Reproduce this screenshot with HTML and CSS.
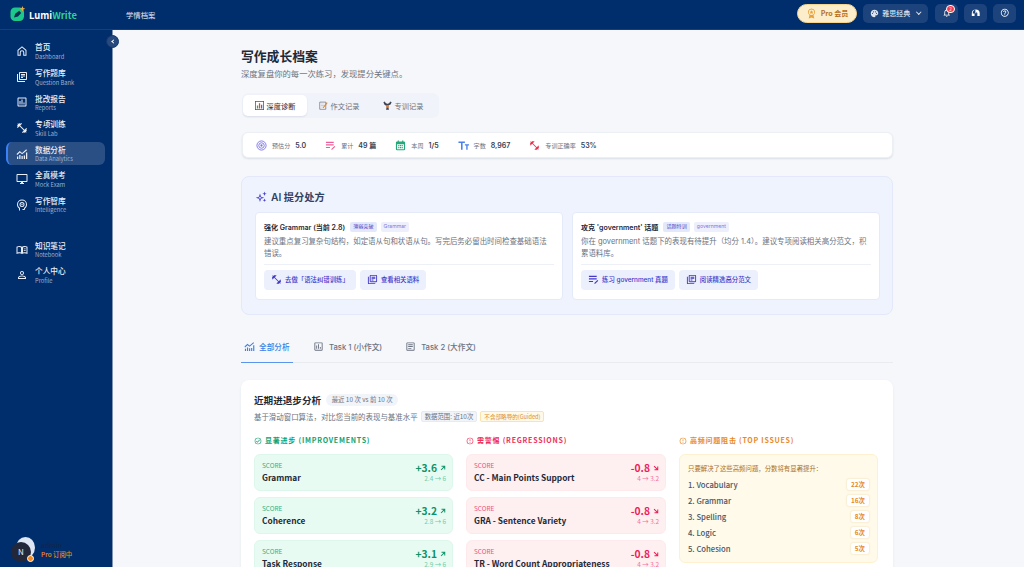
FILE: index.html
```html
<!DOCTYPE html>
<html lang="zh-CN">
<head>
<meta charset="utf-8">
<title>LumiWrite</title>
<link rel="stylesheet" href="styles.css">
</head>
<body>
<svg class="defs" width="0" height="0">
  <symbol id="i-home" viewBox="0 0 24 24"><path d="M12 2.500L3 10v11.500h6.500V15a2.500 2.500 0 0 1 5 0v6.500H21V10zm0 2.600l7 5.900v8.500h-2.500V15a4.500 4.500 0 0 0-9 0v4.500H5V11z"/></symbol>
  <symbol id="i-books" viewBox="0 0 24 24"><path d="M4 6H2v14c0 1.100.9 2 2 2h14v-2H4V6zm16-4H8c-1.100 0-2 .9-2 2v12c0 1.100.9 2 2 2h12c1.100 0 2-.9 2-2V4c0-1.100-.9-2-2-2zm0 14H8V4h12v12zM10 9h8v2h-8zm0 3h4v2h-4zm0-6h8v2h-8z"/></symbol>
  <symbol id="i-report" viewBox="0 0 24 24"><path d="M19 3H5c-1.100 0-2 .9-2 2v14c0 1.100.9 2 2 2h14c1.100 0 2-.9 2-2V5c0-1.100-.9-2-2-2zm0 16H5V5h14v14zM7 10h2v7H7zm4-3h2v10h-2zm4 6h2v4h-2z"/></symbol>
  <symbol id="i-fit" viewBox="0 0 24 24"><path d="M20.570 14.860L22 13.430 20.570 12 17 15.570 8.430 7 12 3.430 10.570 2 9.140 3.430 7.710 2 5.570 4.140 4.140 2.710 2.710 4.140l1.430 1.430L2 7.710l1.430 1.430L2 10.570 3.430 12 7 8.430 15.570 17 12 20.570 13.430 22l1.430-1.430L16.290 22l2.140-2.140 1.430 1.430 1.430-1.430-1.430-1.430L22 16.290z"/></symbol>
  <symbol id="i-chart" viewBox="0 0 24 24"><path d="M2 22v-5h2.500v5zm4.500 0v-8H9v8zm4.500 0v-6h2.500v6zm4.500 0v-7H18v7zm4.500 0V9h2.500v13zM2.500 14L1 12.200l6.500-6 4.700 3.600L20.500 2.500 22 4.300l-9.700 8.400L7.700 9.200z"/></symbol>
  <symbol id="i-desktop" viewBox="0 0 24 24"><path d="M21 2H3c-1.100 0-2 .9-2 2v12c0 1.100.9 2 2 2h7v2H8v2h8v-2h-2v-2h7c1.100 0 2-.9 2-2V4c0-1.100-.9-2-2-2zm0 14H3V4h18v12z"/></symbol>
  <symbol id="i-brain" viewBox="0 0 24 24"><path d="M12 1a10 10 0 0 0-10 10c0 3.200 1.500 6 4 7.800V23h2v-5.300C5.600 16.300 4 13.900 4 11a8 8 0 0 1 16 0c0 3-1.700 5.500-4 6.800V20h-3v2h3a2 2 0 0 0 2-2v-1.200c2.500-1.800 4-4.600 4-7.800A10 10 0 0 0 12 1zm0 5a5 5 0 1 0 0 10 5 5 0 0 0 0-10zm0 2a3 3 0 1 1 0 6 3 3 0 0 1 0-6zm0 1.700a1.300 1.300 0 1 0 0 2.600 1.300 1.300 0 0 0 0-2.600z"/></symbol>
  <symbol id="i-book" viewBox="0 0 24 24"><path d="M1 5.500C3 4.500 5 4 7 4c2 0 3.800.5 5 1.500C13.200 4.500 15 4 17 4c2 0 4 .5 6 1.500V20c-2-1-4-1.500-6-1.500-2 0-3.800.5-5 1.500-1.200-1-3-1.500-5-1.500-2 0-4 .5-6 1.500zm2 1.300V17c1.300-.4 2.700-.6 4-.6 1.100 0 2.100.2 3 .5V7c-.9-.6-1.900-1-3-1-1.300 0-2.700.3-4 .8zM14 7v10c.9-.3 1.900-.5 3-.5 1.300 0 2.700.2 4 .6V6.800C19.700 6.300 18.300 6 17 6c-1.100 0-2.100.4-3 1zm1.500 2h4v1.600h-4zm0 3h4v1.600h-4z"/></symbol>
  <symbol id="i-person" viewBox="0 0 24 24"><path d="M12 5.900c1.160 0 2.100.94 2.100 2.100s-.94 2.100-2.100 2.100S9.900 9.160 9.900 8s.94-2.100 2.100-2.100m0 9c2.970 0 6.100 1.460 6.100 2.100v1.100H5.900V17c0-.64 3.130-2.100 6.100-2.100M12 4C9.790 4 8 5.790 8 8s1.790 4 4 4 4-1.790 4-4-1.790-4-4-4zm0 9c-2.670 0-8 1.340-8 4v3h16v-3c0-2.660-5.330-4-8-4z"/></symbol>
  <symbol id="i-bell" viewBox="0 0 24 24"><path d="M12 22c1.100 0 2-.9 2-2h-4c0 1.100.9 2 2 2zm6-6v-5c0-3.070-1.640-5.640-4.500-6.320V4c0-.83-.67-1.500-1.500-1.500s-1.500.67-1.500 1.500v.68C7.630 5.360 6 7.920 6 11v5l-2 2v1h16v-1l-2-2zm-2 1H8v-6c0-2.480 1.510-4.500 4-4.500s4 2.020 4 4.500v6z"/></symbol>
  <symbol id="i-help" viewBox="0 0 24 24"><path d="M11 18h2v-2h-2v2zm1-16C6.480 2 2 6.480 2 12s4.480 10 10 10 10-4.480 10-10S17.520 2 12 2zm0 18c-4.410 0-8-3.590-8-8s3.590-8 8-8 8 3.590 8 8-3.590 8-8 8zm0-14c-2.210 0-4 1.790-4 4h2c0-1.100.9-2 2-2s2 .9 2 2c0 2-3 1.750-3 5h2c0-2.250 3-2.500 3-5 0-2.210-1.790-4-4-4z"/></symbol>
  <symbol id="i-palette" viewBox="0 0 24 24"><path d="M12 2C6.490 2 2 6.490 2 12s4.490 10 10 10c1.380 0 2.500-1.120 2.500-2.500 0-.61-.23-1.200-.64-1.670-.08-.1-.13-.21-.13-.33 0-.28.22-.5.5-.5H16c3.310 0 6-2.690 6-6 0-4.960-4.490-9-10-9zm-5.500 11a1.500 1.500 0 1 1 0-3 1.500 1.500 0 0 1 0 3zm3-4a1.500 1.500 0 1 1 0-3 1.500 1.500 0 0 1 0 3zm5 0a1.500 1.500 0 1 1 0-3 1.500 1.500 0 0 1 0 3zm3 4a1.500 1.500 0 1 1 0-3 1.500 1.500 0 0 1 0 3z"/></symbol>
  <symbol id="i-headset" viewBox="0 0 24 24"><path d="M2 20v-6a10 10 0 0 1 20 0v6h-6v-6.500c0-1.600-1-3-2.500-3.500v3H11V4.500h-1C6.500 5.500 4.500 9 4.500 13v1H9v6z"/></symbol>
  <symbol id="i-medal" viewBox="0 0 24 24"><path d="M12 1a8 8 0 0 0-4.500 14.600L6 23l6-2.500 6 2.500-1.500-7.400A8 8 0 0 0 12 1zm0 2a6 6 0 1 1 0 12 6 6 0 0 1 0-12zm0 2l-1.300 2.800-3 .3 2.200 2-.6 3L12 11.600l2.700 1.500-.6-3 2.200-2-3-.3z"/></symbol>
  <symbol id="i-edit" viewBox="0 0 24 24"><path d="M2 4h17v2.400H2zm0 5.500h17v2.400H2zm0 5.500h9v2.400H2zm18.500-2l1.900 1.900-6.600 6.600h-1.900v-1.900z"/></symbol>
  <symbol id="i-calendar" viewBox="0 0 24 24"><path d="M6 1h2.500v2h7V1H18v2h1.500A2.500 2.500 0 0 1 22 5.500V20a2.500 2.500 0 0 1-2.500 2.500h-15A2.500 2.500 0 0 1 2 20V5.500A2.500 2.500 0 0 1 4.500 3H6zM4.500 9v11h15V9zM7 11h2.500v2.500H7zm3.800 0h2.500v2.500h-2.500zm3.700 0H17v2.500h-2.500zM7 15.500h2.500V18H7zm3.800 0h2.500V18h-2.500zm3.700 0H17V18h-2.500z"/></symbol>
  <symbol id="i-text" viewBox="0 0 24 24"><path d="M1 3h14v3.400h-5V21H6.500V6.400H1zm14 6h9v3h-3v9h-3v-9h-3z"/></symbol>
  <symbol id="i-spark" viewBox="0 0 24 24"><path d="M10 5l2.200 6.300L18.500 13.500 12.200 15.700 10 22l-2.200-6.300L1.500 13.500l6.300-2.200zm0 5.500l-.9 2.100-2.100.9 2.100.9.900 2.100.9-2.100 2.100-.9-2.100-.9zM19 1l1.200 3.300L23.500 5.500l-3.300 1.200L19 10l-1.200-3.300L14.500 5.500l3.300-1.200zM19 15l1 2.500 2.500 1-2.500 1-1 2.500-1-2.500-2.500-1 2.500-1z"/></symbol>
  <symbol id="i-check" viewBox="0 0 24 24"><path d="M12 2a10 10 0 1 0 0 20 10 10 0 0 0 0-20zm0 18a8 8 0 1 1 0-16 8 8 0 0 1 0 16zm4.600-12.400L10 14.200l-2.600-2.600L6 13l4 4 8-8z"/></symbol>
  <symbol id="i-alert" viewBox="0 0 24 24"><path d="M12 2a10 10 0 1 0 0 20 10 10 0 0 0 0-20zm0 18a8 8 0 1 1 0-16 8 8 0 0 1 0 16zM11 7h2v6h-2zm0 8h2v2h-2z"/></symbol>
  <symbol id="i-up" viewBox="0 0 24 24"><path d="M6 3h15v15h-4V9.800L5.500 21.300 2.700 18.500 14.200 7H6z"/></symbol>
  <symbol id="i-down" viewBox="0 0 24 24"><path d="M6 21h15V6h-4v8.200L5.500 2.700 2.700 5.500 14.200 17H6z"/></symbol>
  <symbol id="i-doc" viewBox="0 0 24 24"><path d="M19 3H5a2 2 0 0 0-2 2v14a2 2 0 0 0 2 2h14a2 2 0 0 0 2-2V5a2 2 0 0 0-2-2zm0 16H5V5h14zM7 7h10v2H7zm0 4h10v2H7zm0 4h7v2H7z"/></symbol>
</svg>

<header class="topbar">
  <div class="brand">
    <svg class="logo" viewBox="0 0 16 16">
      <rect x="0.500" y="1.500" width="13.500" height="13.500" rx="4.500" fill="#1cc98a"/>
      <path d="M4 11.500l1.200-3.700 4-3 2 2.200-3.200 3.500z" fill="#0b2c55"/>
      <path d="M12.500 0l.8 2 2 .8-2 .8-.8 2-.8-2-2-.8 2-.8z" fill="#f6a93a"/>
    </svg>
    <span class="brand-name">Lumi<em>Write</em></span>
  </div>
  <div class="crumb">学情档案</div>
  <div class="top-actions">
    <button class="pro-pill"><svg class="ico medal"><use href="#i-medal"/></svg>Pro 会员</button>
    <button class="theme-btn"><svg class="ico"><use href="#i-palette"/></svg>雅思经典<span class="chev"></span></button>
    <button class="square-btn bell-btn"><svg class="ico"><use href="#i-bell"/></svg><span class="badge">2</span></button>
    <button class="square-btn"><svg class="ico"><use href="#i-headset"/></svg></button>
    <button class="square-btn"><svg class="ico"><use href="#i-help"/></svg></button>
  </div>
</header>

<div class="shell">
  <aside class="sidebar">
    <button class="collapse" aria-label="collapse"><span></span></button>
    <nav class="nav">
      <a class="nav-item"><svg class="nav-ico"><use href="#i-home"/></svg><span class="nav-text"><b>首页</b><small>Dashboard</small></span></a>
      <a class="nav-item"><svg class="nav-ico"><use href="#i-books"/></svg><span class="nav-text"><b>写作题库</b><small>Question Bank</small></span></a>
      <a class="nav-item"><svg class="nav-ico"><use href="#i-report"/></svg><span class="nav-text"><b>批改报告</b><small>Reports</small></span></a>
      <a class="nav-item"><svg class="nav-ico"><use href="#i-fit"/></svg><span class="nav-text"><b>专项训练</b><small>Skill Lab</small></span></a>
      <a class="nav-item active"><svg class="nav-ico"><use href="#i-chart"/></svg><span class="nav-text"><b>数据分析</b><small>Data Analytics</small></span></a>
      <a class="nav-item"><svg class="nav-ico"><use href="#i-desktop"/></svg><span class="nav-text"><b>全真模考</b><small>Mock Exam</small></span></a>
      <a class="nav-item"><svg class="nav-ico"><use href="#i-brain"/></svg><span class="nav-text"><b>写作智库</b><small>Intelligence</small></span></a>
    </nav>
    <nav class="nav nav-second">
      <a class="nav-item"><svg class="nav-ico"><use href="#i-book"/></svg><span class="nav-text"><b>知识笔记</b><small>Notebook</small></span></a>
      <a class="nav-item"><svg class="nav-ico"><use href="#i-person"/></svg><span class="nav-text"><b>个人中心</b><small>Profile</small></span></a>
    </nav>
    <div class="user">
      <div class="avatar"><span class="avatar-back"></span><span class="avatar-face">N</span><span class="avatar-tag"></span></div>
      <div class="user-text"><span class="user-name">admin</span><span class="user-plan">Pro 订阅中</span></div>
    </div>
  </aside>

  <main class="main">
    <h1 class="page-title">写作成长档案</h1>
    <p class="page-sub">深度复盘你的每一次练习，发现提分关键点。</p>

    <div class="mode-tabs">
      <button class="mode-tab on">
        <svg class="mode-ico" viewBox="0 0 12 12"><rect x=".5" y=".5" width="11" height="11" fill="#fff" stroke="#4b5563"/><rect x="2.500" y="6" width="1.700" height="4" fill="#3f9b57"/><rect x="5.200" y="3" width="1.700" height="7" fill="#d9483b"/><rect x="8" y="5" width="1.700" height="5" fill="#3b6fd8"/></svg>深度诊断</button>
      <button class="mode-tab">
        <svg class="mode-ico" viewBox="0 0 12 12"><path d="M1 1.500h8v9.500H1z" fill="#fff" stroke="#6b7280"/><path d="M2.500 4h5M2.500 6h5M2.500 8h3" stroke="#9ca3af" stroke-width=".7"/><path d="M5 8.500L10.300 1.500l1.200 1L6 9.500z" fill="#d98a3a"/></svg>作文记录</button>
      <button class="mode-tab">
        <svg class="mode-ico" viewBox="0 0 12 12"><path d="M.5 1.500l2-1 1 2 2 1h1l2-1 1-2 2 1-1.500 3-3 1.500V8l1 3.500H4l1-3.500V6.500l-3-1.500z" fill="#3d4350"/><rect x="4.300" y="5.500" width="3.400" height="3.500" fill="#e07b35"/></svg>专训记录</button>
    </div>

    <section class="stats">
      <div class="stat"><svg class="stat-ico c-violet" viewBox="0 0 24 24"><circle cx="12" cy="12" r="10" fill="none" stroke="currentColor" stroke-width="2"/><circle cx="12" cy="12" r="6" fill="none" stroke="currentColor" stroke-width="2"/><circle cx="12" cy="12" r="2.500" fill="currentColor"/></svg><span class="stat-label">预估分</span><b>5.0</b></div>
      <div class="stat"><svg class="stat-ico c-pink"><use href="#i-edit"/></svg><span class="stat-label">累计</span><b>49 篇</b></div>
      <div class="stat"><svg class="stat-ico c-green"><use href="#i-calendar"/></svg><span class="stat-label">本周</span><b>1/5</b></div>
      <div class="stat"><svg class="stat-ico c-blue"><use href="#i-text"/></svg><span class="stat-label">字数</span><b>8,967</b></div>
      <div class="stat"><svg class="stat-ico c-red"><use href="#i-fit"/></svg><span class="stat-label">专训正确率</span><b>53%</b></div>
    </section>

    <section class="ai-card">
      <h2 class="ai-title"><svg class="ai-ico"><use href="#i-spark"/></svg>AI 提分处方</h2>
      <div class="ai-grid">
        <article class="rx">
          <div class="rx-head"><strong>强化 Grammar (当前 2.8)</strong><span class="tag">薄弱突破</span><span class="tag light">Grammar</span></div>
          <p class="rx-body">建议重点复习复杂句结构，如定语从句和状语从句。写完后务必留出时间检查基础语法错误。</p>
          <div class="rx-actions">
            <button class="rx-btn"><svg class="rx-ico"><use href="#i-fit"/></svg>去做「语法纠错训练」</button>
            <button class="rx-btn"><svg class="rx-ico"><use href="#i-books"/></svg>查看相关语料</button>
          </div>
        </article>
        <article class="rx">
          <div class="rx-head"><strong>攻克 'government' 话题</strong><span class="tag">话题特训</span><span class="tag light">government</span></div>
          <p class="rx-body">你在 government 话题下的表现有待提升（均分 1.4）。建议专项阅读相关高分范文，积累语料库。</p>
          <div class="rx-actions">
            <button class="rx-btn"><svg class="rx-ico"><use href="#i-edit"/></svg>练习 government 真题</button>
            <button class="rx-btn"><svg class="rx-ico"><use href="#i-books"/></svg>阅读精选高分范文</button>
          </div>
        </article>
      </div>
    </section>

    <div class="task-tabs">
      <a class="task-tab on"><svg class="task-ico"><use href="#i-chart"/></svg>全部分析</a>
      <a class="task-tab"><svg class="task-ico"><use href="#i-report"/></svg>Task 1 (小作文)</a>
      <a class="task-tab"><svg class="task-ico"><use href="#i-doc"/></svg>Task 2 (大作文)</a>
    </div>

    <section class="progress">
      <div class="progress-head"><h2>近期进退步分析</h2><span class="pill">最近 10 次 vs 前 10 次</span></div>
      <div class="progress-sub"><span>基于滑动窗口算法，对比您当前的表现与基准水平</span><span class="chip">数据范围: 近10次</span><span class="chip warn">不含部略导的(Guided)</span></div>
      <div class="columns">
        <div class="col">
          <h3 class="col-title t-green"><svg class="col-ico"><use href="#i-check"/></svg>显著进步 (IMPROVEMENTS)</h3>
          <div class="delta good"><div><small>SCORE</small><b>Grammar</b></div><div class="delta-num"><span class="big">+3.6<svg class="arrow"><use href="#i-up"/></svg></span><span class="range">2.4 → 6</span></div></div>
          <div class="delta good"><div><small>SCORE</small><b>Coherence</b></div><div class="delta-num"><span class="big">+3.2<svg class="arrow"><use href="#i-up"/></svg></span><span class="range">2.8 → 6</span></div></div>
          <div class="delta good"><div><small>SCORE</small><b>Task Response</b></div><div class="delta-num"><span class="big">+3.1<svg class="arrow"><use href="#i-up"/></svg></span><span class="range">2.9 → 6</span></div></div>
        </div>
        <div class="col">
          <h3 class="col-title t-red"><svg class="col-ico"><use href="#i-alert"/></svg>需警惕 (REGRESSIONS)</h3>
          <div class="delta bad"><div><small>SCORE</small><b>CC - Main Points Support</b></div><div class="delta-num"><span class="big">-0.8<svg class="arrow"><use href="#i-down"/></svg></span><span class="range">4 → 3.2</span></div></div>
          <div class="delta bad"><div><small>SCORE</small><b>GRA - Sentence Variety</b></div><div class="delta-num"><span class="big">-0.8<svg class="arrow"><use href="#i-down"/></svg></span><span class="range">4 → 3.2</span></div></div>
          <div class="delta bad"><div><small>SCORE</small><b>TR - Word Count Appropriateness</b></div><div class="delta-num"><span class="big">-0.8<svg class="arrow"><use href="#i-down"/></svg></span><span class="range">4 → 3.2</span></div></div>
        </div>
        <div class="col">
          <h3 class="col-title t-orange"><svg class="col-ico"><use href="#i-alert"/></svg>高频问题阻击 (TOP ISSUES)</h3>
          <div class="issues">
            <p>只要解决了这些高频问题，分数将有显著提升：</p>
            <ul>
              <li>1. Vocabulary<span>22次</span></li>
              <li>2. Grammar<span>16次</span></li>
              <li>3. Spelling<span>8次</span></li>
              <li>4. Logic<span>6次</span></li>
              <li>5. Cohesion<span>5次</span></li>
            </ul>
          </div>
        </div>
      </div>
    </section>
  </main>
</div>
</body>
</html>
```
FILE: styles.css
```css
* { box-sizing: border-box; }
html, body { margin: 0; height: 567px; overflow: hidden; }
body {
  font-family: "Noto Sans CJK SC", "Noto Sans", sans-serif;
  background: #f5f7fa;
  color: #1f2937;
  width: 1024px;
}
button { font: inherit; border: 0; cursor: pointer; }
.defs { position: absolute; }
.ico { width: 8px; height: 8px; fill: currentColor; flex: none; }

.topbar {
  height: 30px;
  background: #002d6b;
  border-bottom: 1px solid #163f78;
  display: flex;
  align-items: center;
  color: #fff;
}
.brand { width: 126px; display: flex; align-items: center; padding-left: 10px; gap: 3px; }
.logo { width: 16px; height: 16px; margin-bottom: 2px; }
.brand-name { font-size: 9.400px; font-weight: 700; color: #fff; }
.brand-name em { font-style: normal; color: #2fd39a; }
.crumb { font-size: 7.360px; font-weight: 500; color: #c9d4e4; }
.top-actions { margin-left: auto; margin-right: 8px; display: flex; align-items: center; gap: 6px; margin-top: -3px; }
.pro-pill {
  width: 60px; height: 19px; border-radius: 10px;
  background: #fdeecb; border: 1px solid #f8d58f; color: #b8701d;
  font-size: 7.040px; font-weight: 700;
  display: flex; align-items: center; justify-content: center; gap: 4px; padding: 0;
}
.medal { width: 11px; height: 11px; color: #e8a23c; }
.theme-btn {
  width: 65px; height: 19px; border-radius: 5px;
  background: #1c437c; color: #dbe4f0; font-size: 7.040px; font-weight: 500;
  display: flex; align-items: center; justify-content: center; gap: 3px; padding: 0;
}
.theme-btn .ico { width: 9px; height: 9px; }
.chev { width: 3.500px; height: 3.500px; margin-left: 4px; margin-top: -2px; border-right: 1px solid #dbe4f0; border-bottom: 1px solid #dbe4f0; transform: rotate(45deg); }
.square-btn {
  width: 23px; height: 19px; border-radius: 5px; background: #1c437c; color: #fff;
  display: flex; align-items: center; justify-content: center; padding: 0; position: relative;
}
.square-btn .ico { width: 9.500px; height: 9.500px; }
.bell-btn { margin-left: 1px; }
.badge {
  position: absolute; top: 1px; right: 3px; width: 9px; height: 8px; border-radius: 4px;
  background: #ef3b4c; border: 1px solid #fff; color: #fff; font-size: 4.500px; line-height: 6px; text-align: center;
}

.shell { display: flex; height: 537px; }
.sidebar {
  width: 113px; flex: none; background: #002d6b; border-right: 1px solid #8094b2;
  position: relative; display: flex; flex-direction: column; padding: 9.500px 7px 0 6px;
}
.collapse {
  position: absolute; right: -7px; top: 4.500px; width: 13px; height: 13px; border-radius: 50%;
  background: #27497c; border: 1px solid #0f3670; padding: 0; display: flex; align-items: center; justify-content: center; z-index: 2;
}
.collapse span { width: 3px; height: 3px; margin-left: 1px; border-left: 1px solid #fff; border-bottom: 1px solid #fff; transform: rotate(45deg); }
.nav { display: flex; flex-direction: column; gap: 2.200px; }
.nav-second { margin-top: 21.500px; }
.nav-item {
  height: 23.400px; display: flex; align-items: center; gap: 7.500px; padding-left: 9.500px; border-radius: 6px;
  color: #e9eef6; border-left: 2px solid transparent; margin: 0;
}
.nav-item.active { background: #2a4f85; border-left-color: #3b82f6; }
.nav-ico { width: 12px; height: 12px; fill: currentColor; flex: none; margin-left: -2px; }
.nav-text { display: flex; flex-direction: column; line-height: 1; }
.nav-text b { font-size: 7.680px; font-weight: 500; color: #eef2f8; line-height: 9px; }
.nav-text small { font-size: 5.760px; color: #9fb2cd; line-height: 7px; margin-top: 1.500px; }
.user { margin-top: auto; margin-bottom: 3px; display: flex; align-items: center; gap: 6px; padding-left: 5px; }
.avatar { width: 24px; height: 27px; position: relative; flex: none; }
.avatar-back { position: absolute; left: 5px; top: 0; width: 19px; height: 21px; border-radius: 50%; background: #dfe6f4; }
.avatar-face {
  position: absolute; left: 0; top: 5px; width: 20px; height: 20px; border-radius: 50%; background: #22283a;
  color: #e7eaf0; font-size: 8px; text-align: center; line-height: 20px;
}
.avatar-tag { position: absolute; right: 1px; bottom: 2px; width: 7px; height: 7px; border-radius: 50%; background: #ee8b24; border: 1px solid #fff; }
.user-text { display: flex; flex-direction: column; margin-bottom: 2px; }
.user-name { font-size: 7.040px; color: #10264c; line-height: 10px; }
.user-plan { font-size: 6.400px; color: #f08c24; font-weight: 500; line-height: 9px; }

.main { flex: 1; padding: 17px 131px 0 128px; overflow: hidden; min-width: 0; font-family: "Inter", "Noto Sans CJK SC", sans-serif; }
.page-title { margin: 0; font-size: 12.800px; font-weight: 700; line-height: 18px; color: #1f2937; font-family: "Noto Sans CJK SC", sans-serif; }
.page-sub { margin: 3px 0 0; font-size: 8.320px; line-height: 12px; color: #6b7280; }
.mode-tabs {
  margin: 13px 0 0 1px; width: 197px; height: 25px; background: #f0f3f9; border-radius: 6px;
  display: flex; align-items: center; padding: 0 1px; gap: 0;
}
.mode-tab {
  height: 21px; width: 64px; background: none; border-radius: 5px; color: #6b7280; font-size: 7.200px;
  display: flex; align-items: center; justify-content: center; gap: 3px; padding: 0;
}
.mode-tab.on { background: #fff; color: #374151; font-weight: 500; box-shadow: 0 1px 2px rgba(30,50,90,.1); }
.mode-ico { width: 9px; height: 9px; flex: none; }

.stats {
  margin: 14px 0 0 1px; height: 26px; background: #fff; border: 1px solid #eceff4; border-radius: 6px;
  box-shadow: 0 1px 2px rgba(30,50,90,.12); display: flex; align-items: center; padding-left: 13px; gap: 19px;
}
.stat { display: flex; align-items: center; gap: 4px; }
.stat-label { font-size: 6.080px; color: #6b7280; margin-left: 1px; margin-right: 1px; }
.stat b { font-size: 7.040px; color: #374151; font-weight: 600; }
.stat-ico { width: 11px; height: 11px; fill: currentColor; flex: none; }
.c-violet { color: #7c74e8; } .c-pink { color: #ec5f9c; } .c-green { color: #26a97a; } .c-blue { color: #4a80ee; } .c-red { color: #ee2f50; }

.ai-card {
  margin-top: 18px; height: 139px; background: #eff3fe; border: 1px solid #e3e9fb; border-radius: 8px; padding: 13px;
}
.ai-title { margin: 0; font-size: 10.240px; line-height: 14px; font-weight: 600; display: flex; align-items: center; gap: 4px; color: #33405f; }
.ai-ico { width: 12px; height: 12px; fill: #4f46c8; }
.ai-grid { margin-top: 8px; display: grid; grid-template-columns: 308px 308px; gap: 9px; }
.rx { background: #fff; border: 1px solid #e5eaf8; border-radius: 4px; height: 88px; padding: 9px 8px 0; }
.rx-head { display: flex; align-items: center; gap: 4px; height: 10px; }
.rx-head strong { font-size: 7.040px; font-weight: 600; color: #1f2937; margin-right: 1px; }
.tag { font-size: 5.120px; line-height: 9px; height: 9.500px; padding: 0 3px; border-radius: 2px; background: #e3e8fb; color: #4f46c8; }
.tag.light { background: #edf0fc; color: #7d79de; }
.rx-body { margin: 4px 0 0; font-size: 7.450px; line-height: 12.300px; color: #6b7280; height: 25px; }
.rx-actions { margin-top: 3px; padding-top: 5px; border-top: 1px solid #edf0f6; display: flex; gap: 4px; }
.rx-btn {
  height: 19.500px; border-radius: 4px; background: #eceffc; color: #4338ca; font-size: 6.400px; font-weight: 500;
  display: flex; align-items: center; gap: 3px; padding: 0 7px;
}
.rx-ico { width: 11px; height: 11px; fill: currentColor; flex: none; }

.task-tabs { margin-top: 16px; height: 32px; border-bottom: 1px solid #e8ebf0; display: flex; gap: 17px; }
.task-tab {
  height: 32px; display: flex; align-items: center; gap: 5px; padding: 0 3px; color: #6b7280; font-size: 7.680px; font-weight: 500; border-bottom: 1px solid transparent;
}
.task-tab.on { color: #3b7fe8; border-bottom-color: #5b94ee; width: 52px; gap: 4px; white-space: nowrap; }
.task-ico { width: 11px; height: 11px; fill: currentColor; flex: none; }

.progress {
  margin-top: 17px; height: 300px; background: #fff; border-radius: 8px; padding: 13px; box-shadow: 0 1px 3px rgba(30,50,90,.06);
  font-family: "Noto Sans CJK SC", sans-serif;
}
.progress-head { display: flex; align-items: center; gap: 5px; height: 14px; }
.progress-head h2 { margin: 0; font-size: 9.600px; font-weight: 700; color: #1f2937; }
.pill { font-size: 6.400px; line-height: 12px; height: 12.500px; padding: 0 5.500px; border-radius: 7px; background: #f1f4f9; color: #6b7280; }
.progress-sub { margin-top: 3px; display: flex; align-items: center; gap: 3px; font-size: 7.450px; color: #6b7280; height: 12px; white-space: nowrap; }
.chip { font-size: 6.400px; line-height: 10px; padding: 0 3px; height: 11px; border-radius: 2px; background: #f1f4f9; border: 1px solid #e6eaf1; color: #6b7280; }
.chip.warn { background: #fff9ea; border-color: #fbe3ab; color: #d98d25; font-size: 5.600px; }
.columns { margin-top: 14px; display: grid; grid-template-columns: 199px 200px 199px; gap: 13px; }
.col { min-width: 0; }
.col-title { margin: 0 0 9px; font-size: 7.040px; line-height: 9px; font-weight: 700; letter-spacing: .75px; display: flex; align-items: center; gap: 3px; }
.col-ico { width: 8px; height: 8px; fill: currentColor; flex: none; }
.t-green { color: #10a270; } .t-red { color: #ee2f5a; } .t-orange { color: #e8891f; }
.delta {
  height: 36.500px; border-radius: 6px; display: flex; justify-content: space-between; align-items: center; padding: 0 6px 0 7px; margin-bottom: 6.500px; border: 1px solid transparent;
}
.delta small { display: block; font-size: 6.400px; line-height: 8px; }
.delta b { display: block; font-size: 8.320px; line-height: 12px; font-weight: 600; color: #1f2937; margin-top: 1px; white-space: nowrap; }
.delta-num { display: flex; flex-direction: column; align-items: flex-end; }
.big { font-size: 10.240px; line-height: 13px; font-weight: 600; display: flex; align-items: center; gap: 3px; }
.arrow { width: 6px; height: 6px; fill: currentColor; }
.range { font-size: 6.400px; line-height: 8px; margin-top: 1px; }
.good { background: #e8fbf3; border-color: #def7ec; }
.good small { color: #2faf80; } .good .big { color: #0e9267; } .good .range { color: #6fcda8; }
.bad { background: #feeff1; border-color: #feeaed; }
.bad small { color: #f0517c; } .bad .big { color: #ee1c55; } .bad .range { color: #f4709a; }
.issues { height: 109px; background: #fffae9; border: 1px solid #fdf1cf; border-radius: 6px; padding: 8px 8px 0 8px; }
.issues p { margin: 0; font-size: 6.400px; line-height: 11px; color: #a9702a; }
.issues ul { list-style: none; margin: 2px 0 0; padding: 0; }
.issues li {
  height: 16.200px; display: flex; align-items: center; justify-content: space-between; font-size: 7.680px; font-weight: 500; color: #4b5563;
}
.issues li span { background: #fff; border-radius: 2px; height: 11px; line-height: 11px; padding: 0 4px; font-size: 6.400px; font-weight: 700; color: #e8891f; box-shadow: 0 0 2px rgba(200,140,40,.35); }
```
